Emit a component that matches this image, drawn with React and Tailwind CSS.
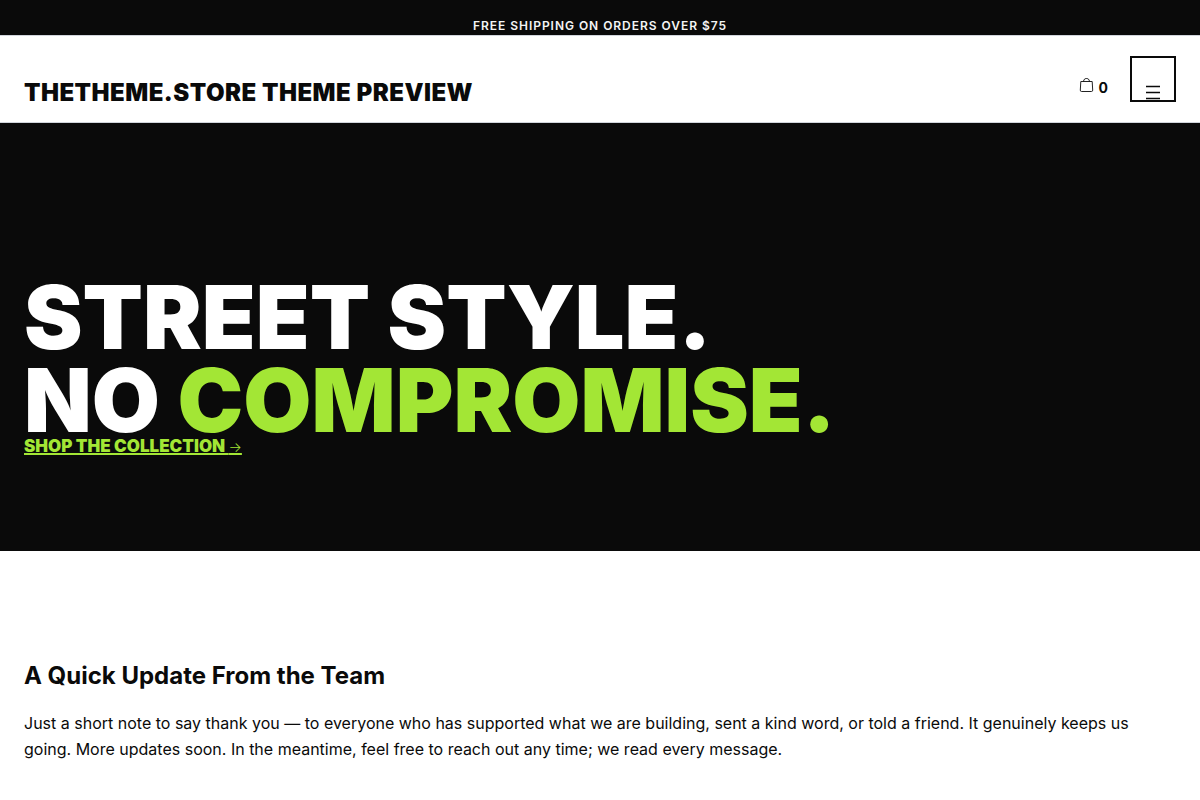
import React from 'react';

const BagIcon = () => (
    <svg className="h-4 w-4" viewBox="0 0 16 16" fill="none" stroke="currentColor" aria-hidden="true">
        <path d="M1.8 4.5h11.4l.5 8.6a1.3 1.3 0 0 1-1.3 1.4H2.6a1.3 1.3 0 0 1-1.3-1.4z" strokeWidth="0.9" />
        <path d="M4.6 4.5C4.6 2.6 5.8 1.5 7.5 1.5s2.9 1.1 2.9 3" />
    </svg>
);

const MenuIcon = () => (
    <svg className="h-4 w-4" viewBox="0 0 16 16" stroke="currentColor" strokeWidth="1.3" aria-hidden="true">
        <path d="M1 2.5h14M1 8.5h14M1 14.5h14" />
    </svg>
);

const App = () => {
    return (
        <div className="min-h-screen bg-white font-['Inter',sans-serif] text-[#0a0a0a]">
            <div className="bg-[#0a0a0a] pt-4 text-center text-xs leading-[19px] font-semibold tracking-[0.08em] text-neutral-100 uppercase">
                Free shipping on orders over $75
            </div>

            <header className="flex items-end justify-between border-y border-gray-300 px-6 py-5">
                <a href="#" className="text-2xl leading-[18px] font-black tracking-[0.02em] uppercase">
                    TheTheme.Store Theme Preview
                </a>
                <div className="flex items-center gap-[22px]">
                    <a href="#" aria-label="Cart" className="flex items-start gap-1 pt-[18px] text-sm leading-[22px] font-bold">
                        <BagIcon />
                        <span>0</span>
                    </a>
                    <button
                        type="button"
                        aria-label="Menu"
                        className="flex h-[46px] w-[46px] items-end justify-center border-2 border-[#0a0a0a]"
                    >
                        <MenuIcon />
                    </button>
                </div>
            </header>

            <section className="bg-[#0a0a0a] px-6 pt-[153px] pb-[100px]">
                <h1 className="text-[88px] leading-[83px] font-black text-white uppercase">
                    Street style.
                    <br />
                    No <span className="text-[#a3e635]">compromise.</span>
                </h1>
                <a
                    href="#"
                    className="block w-fit text-[17px] leading-2 font-black text-[#a3e635] uppercase underline decoration-2"
                >
                    Shop the collection <span className="text-sm leading-2 font-light">→</span>
                </a>
            </section>

            <main className="px-6 pt-[107px] pb-4">
                <h2 className="text-2xl leading-9 font-bold">A Quick Update From the Team</h2>
                <p className="mt-4 text-base leading-[26px]">
                    Just a short note to say thank you — to everyone who has supported what we are building, sent a
                    kind word, or told a friend. It genuinely keeps us going. More updates soon. In the meantime, feel
                    free to reach out any time; we read every message.
                </p>
            </main>
        </div>
    );
};

export default App;
